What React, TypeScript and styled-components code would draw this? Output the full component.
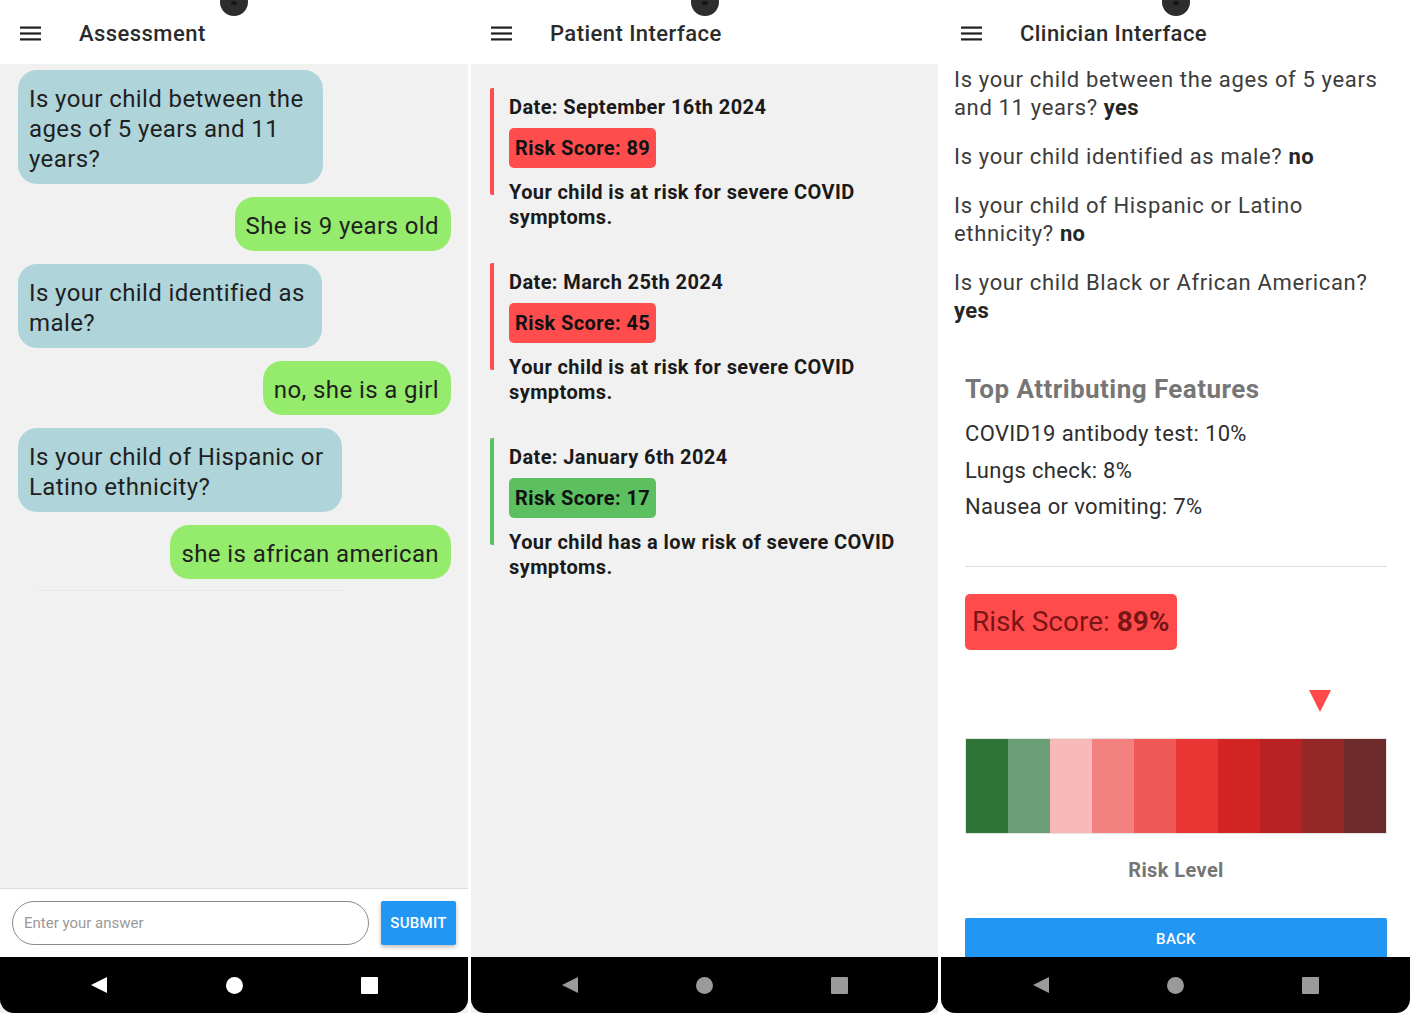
import React from "react";
import styled, { createGlobalStyle } from "styled-components";

const GlobalStyle = createGlobalStyle`
  html, body {
    margin: 0;
    padding: 0;
    background: #ffffff;
    font-family: Roboto, "Noto Sans", sans-serif;
  }
`;

const Screens = styled.div`
  display: grid;
  grid-template-columns: 468px 467px 469px;
  column-gap: 3px;
  height: 1013px;
  overflow: hidden;
`;

const Phone = styled.div<{ $bg: string }>`
  position: relative;
  display: flex;
  flex-direction: column;
  height: 1013px;
  background: ${(p) => p.$bg};
  overflow: hidden;
`;

const Camera = styled.div`
  position: absolute;
  top: -12px;
  left: 50%;
  width: 28px;
  height: 28px;
  margin-left: -14px;
  border-radius: 50%;
  background: #2d2d2d;
  z-index: 2;

  &::after {
    content: "";
    position: absolute;
    left: 11px;
    top: 13px;
    width: 6px;
    height: 4px;
    border-radius: 50%;
    background: #151515;
  }
`;

const Toolbar = styled.div`
  display: flex;
  align-items: center;
  flex: 0 0 64px;
  height: 64px;
  padding: 2px 0 0 20px;
  background: #ffffff;
  box-sizing: border-box;
`;

const MenuIcon = styled.svg`
  width: 21px;
  height: 15px;
  margin-right: 38px;
`;

const Title = styled.h1`
  margin: 0;
  font-size: 22px;
  font-weight: 500;
  color: #2b2b2b;
  letter-spacing: 0.45px;
`;

const Content = styled.div<{ $bg: string }>`
  flex: 1;
  display: flex;
  flex-direction: column;
  background: ${(p) => p.$bg};
  overflow: hidden;
`;

const NavBar = styled.div<{ $icon: string }>`
  flex: 0 0 56px;
  display: grid;
  grid-template-columns: repeat(3, 40px);
  column-gap: 95px;
  justify-content: center;
  align-items: center;
  justify-items: center;
  background: #000000;
  border-radius: 0 0 14px 14px;
  color: ${(p) => p.$icon};
`;

const NavBack = styled.div`
  width: 0;
  height: 0;
  border-top: 8px solid transparent;
  border-bottom: 8px solid transparent;
  border-right: 16px solid currentColor;
`;

const NavHome = styled.div`
  width: 17px;
  height: 17px;
  border-radius: 50%;
  background: currentColor;
`;

const NavRecent = styled.div`
  width: 17px;
  height: 17px;
  border-radius: 1px;
  background: currentColor;
`;

/* ---------- assessment chat ---------- */

const ChatList = styled.div`
  flex: 1;
  display: flex;
  flex-direction: column;
  gap: 13px;
  padding: 6px 17px 0 18px;
`;

const Bubble = styled.div<{ $me?: boolean; $w?: number }>`
  align-self: ${(p) => (p.$me ? "flex-end" : "flex-start")};
  width: ${(p) => (p.$w ? `${p.$w}px` : "auto")};
  box-sizing: border-box;
  padding: 14px 12px 10px 11px;
  border-radius: 19px;
  background: ${(p) => (p.$me ? "#95eb6b" : "#afd4da")};
  font-size: 24px;
  line-height: 30px;
  color: #1f1f1f;
  letter-spacing: 0.4px;
`;

const FaintRule = styled.div`
  width: 306px;
  height: 1px;
  margin: -2px 0 0 19px;
  background: #e8e8e8;
`;

const Composer = styled.div`
  flex: 0 0 69px;
  display: flex;
  align-items: center;
  gap: 12px;
  padding: 0 12px;
  background: #ffffff;
  border-top: 1px solid #dcdcdc;
  box-sizing: border-box;
`;

const AnswerInput = styled.input`
  flex: 1;
  height: 44px;
  box-sizing: border-box;
  border: 1px solid #8a8a8a;
  border-radius: 22px;
  padding: 0 11px;
  font-family: Roboto, sans-serif;
  font-size: 15px;
  color: #333;
  background: #fff;
  outline: none;

  &::placeholder {
    color: #9a9a9a;
  }
`;

const BlueButton = styled.button<{ $full?: boolean }>`
  flex: ${(p) => (p.$full ? "0 0 42px" : "0 0 75px")};
  height: ${(p) => (p.$full ? "42px" : "44px")};
  width: ${(p) => (p.$full ? "100%" : "75px")};
  border: none;
  border-radius: 2px;
  background: #2196f3;
  color: #ffffff;
  font-family: Roboto, sans-serif;
  font-size: 15px;
  font-weight: 500;
  letter-spacing: 0.3px;
  box-shadow: ${(p) => (p.$full ? "none" : "0 2px 4px rgba(0,0,0,0.28)")};
  padding: 0;
`;

/* ---------- patient history ---------- */

const History = styled.div`
  display: flex;
  flex-direction: column;
  gap: 68px;
  padding: 24px 0 0 19px;
`;

const Entry = styled.div<{ $color: string }>`
  height: 107px;
  border-left: 4px solid ${(p) => p.$color};
  border-radius: 2px;
  padding: 7px 0 0 15px;
  box-sizing: border-box;
`;

const EntryDate = styled.div`
  font-size: 20px;
  font-weight: 700;
  line-height: 24px;
  letter-spacing: 0.4px;
  color: #1a1a1a;
`;

const ScoreBadge = styled.div<{ $color: string }>`
  display: inline-block;
  margin-top: 9px;
  padding: 0 6px;
  height: 40px;
  line-height: 40px;
  border-radius: 5px;
  background: ${(p) => p.$color};
  font-size: 20px;
  font-weight: 700;
  letter-spacing: 0.4px;
  color: #111;
`;

const EntryNote = styled.div`
  margin-top: 12px;
  width: 410px;
  font-size: 20px;
  font-weight: 700;
  line-height: 25px;
  letter-spacing: 0.4px;
  color: #1a1a1a;
`;

/* ---------- clinician ---------- */

const Answers = styled.div`
  display: flex;
  flex-direction: column;
  gap: 21px;
  padding: 2px 20px 0 13px;
`;

const Answer = styled.p`
  margin: 0;
  font-size: 22px;
  line-height: 28px;
  color: #3c3c3c;
  letter-spacing: 0.65px;

  b {
    color: #262626;
    font-weight: 700;
    letter-spacing: 0.3px;
  }
`;

const Summary = styled.div`
  display: flex;
  flex-direction: column;
  padding: 48px 23px 0 24px;
`;

const SectionTitle = styled.h2`
  margin: 0;
  font-size: 26px;
  font-weight: 700;
  line-height: 32px;
  letter-spacing: 0.45px;
  color: #767676;
`;

const Features = styled.div`
  margin-top: 11px;
`;

const Feature = styled.div`
  font-size: 22px;
  line-height: 36.5px;
  color: #2e2e2e;
  letter-spacing: 0.35px;
`;

const Divider = styled.hr`
  margin: 40px 0 0;
  border: none;
  height: 1px;
  background: #dedede;
`;

const RiskBox = styled.div`
  align-self: flex-start;
  margin-top: 27px;
  height: 56px;
  line-height: 56px;
  padding: 0 7px;
  border-radius: 5px;
  background: #ff4b4b;
  font-size: 28px;
  color: rgba(70, 0, 0, 0.72);

  b {
    font-weight: 700;
  }
`;

const MarkerRow = styled.div`
  margin-top: 40px;
  height: 22px;
  display: flex;
`;

const Marker = styled.div`
  width: 0;
  height: 0;
  border-left: 11px solid transparent;
  border-right: 11px solid transparent;
  border-top: 22px solid #ff4848;
`;

const Scale = styled.div`
  margin-top: 26px;
  height: 96px;
  display: grid;
  grid-template-columns: repeat(10, 1fr);
  border: 1px solid #e4e4e4;
  box-sizing: border-box;
`;

const Swatch = styled.div<{ $c: string }>`
  background: ${(p) => p.$c};
`;

const ScaleLabel = styled.div`
  margin: 24px 0 36px;
  text-align: center;
  font-size: 20px;
  font-weight: 700;
  line-height: 24px;
  letter-spacing: 0.4px;
  color: #757575;
`;

const Hamburger = () => (
  <MenuIcon viewBox="0 0 21 15">
    <rect x="0" y="0.5" width="21" height="2.2" fill="#1f1f1f" />
    <rect x="0" y="6.4" width="21" height="2.2" fill="#1f1f1f" />
    <rect x="0" y="12.3" width="21" height="2.2" fill="#1f1f1f" />
  </MenuIcon>
);

function Screen({
  title,
  bg,
  navIcon,
  children,
}: {
  title: string;
  bg: string;
  navIcon: string;
  children: React.ReactNode;
}) {
  return (
    <Phone $bg={bg}>
      <Camera />
      <Toolbar>
        <Hamburger />
        <Title>{title}</Title>
      </Toolbar>
      <Content $bg={bg}>{children}</Content>
      <NavBar $icon={navIcon}>
        <NavBack />
        <NavHome />
        <NavRecent />
      </NavBar>
    </Phone>
  );
}

const chat = [
  { me: false, w: 305, text: "Is your child between the ages of 5 years and 11 years?" },
  { me: true, text: "She is 9 years old" },
  { me: false, w: 304, text: "Is your child identified as male?" },
  { me: true, text: "no, she is a girl" },
  { me: false, w: 324, text: "Is your child of Hispanic or Latino ethnicity?" },
  { me: true, text: "she is african american" },
];

const history = [
  { date: "Date: September 16th 2024", score: 89, color: "#ff4d4d", note: "Your child is at risk for severe COVID symptoms." },
  { date: "Date: March 25th 2024", score: 45, color: "#ff4d4d", note: "Your child is at risk for severe COVID symptoms." },
  { date: "Date: January 6th 2024", score: 17, color: "#5cbf60", note: "Your child has a low risk of severe COVID symptoms." },
];

const answers = [
  { q: "Is your child between the ages of 5 years and 11 years?", a: "yes" },
  { q: "Is your child identified as male?", a: "no" },
  { q: "Is your child of Hispanic or Latino ethnicity?", a: "no" },
  { q: "Is your child Black or African American?", a: "yes" },
];

const features = ["COVID19 antibody test: 10%", "Lungs check: 8%", "Nausea or vomiting: 7%"];

const scaleColors = [
  "#2e7338",
  "#6b9f75",
  "#f8b9b9",
  "#f28180",
  "#ef5958",
  "#ea3535",
  "#d32424",
  "#b82222",
  "#962727",
  "#6e2b2b",
];

export default function App() {
  const markerOffset = 344;
  return (
    <>
      <GlobalStyle />
      <Screens>
        <Screen title="Assessment" bg="#f1f1f1" navIcon="#ffffff">
          <ChatList>
            {chat.map((m, i) => (
              <Bubble key={i} $me={m.me} $w={m.w}>
                {m.text}
              </Bubble>
            ))}
            <FaintRule />
          </ChatList>
          <Composer>
            <AnswerInput placeholder="Enter your answer" />
            <BlueButton>SUBMIT</BlueButton>
          </Composer>
        </Screen>

        <Screen title="Patient Interface" bg="#f1f1f1" navIcon="#9a9a9a">
          <History>
            {history.map((h) => (
              <Entry key={h.date} $color={h.color}>
                <EntryDate>{h.date}</EntryDate>
                <ScoreBadge $color={h.color}>Risk Score: {h.score}</ScoreBadge>
                <EntryNote>{h.note}</EntryNote>
              </Entry>
            ))}
          </History>
        </Screen>

        <Screen title="Clinician Interface" bg="#ffffff" navIcon="#9a9a9a">
          <Answers>
            {answers.map((a) => (
              <Answer key={a.q}>
                {a.q} <b>{a.a}</b>
              </Answer>
            ))}
          </Answers>
          <Summary>
            <SectionTitle>Top Attributing Features</SectionTitle>
            <Features>
              {features.map((f) => (
                <Feature key={f}>{f}</Feature>
              ))}
            </Features>
            <Divider />
            <RiskBox>
              Risk Score: <b>89%</b>
            </RiskBox>
            <MarkerRow style={{ paddingLeft: markerOffset }}>
              <Marker />
            </MarkerRow>
            <Scale>
              {scaleColors.map((c) => (
                <Swatch key={c} $c={c} />
              ))}
            </Scale>
            <ScaleLabel>Risk Level</ScaleLabel>
            <BlueButton $full>BACK</BlueButton>
          </Summary>
        </Screen>
      </Screens>
    </>
  );
}
